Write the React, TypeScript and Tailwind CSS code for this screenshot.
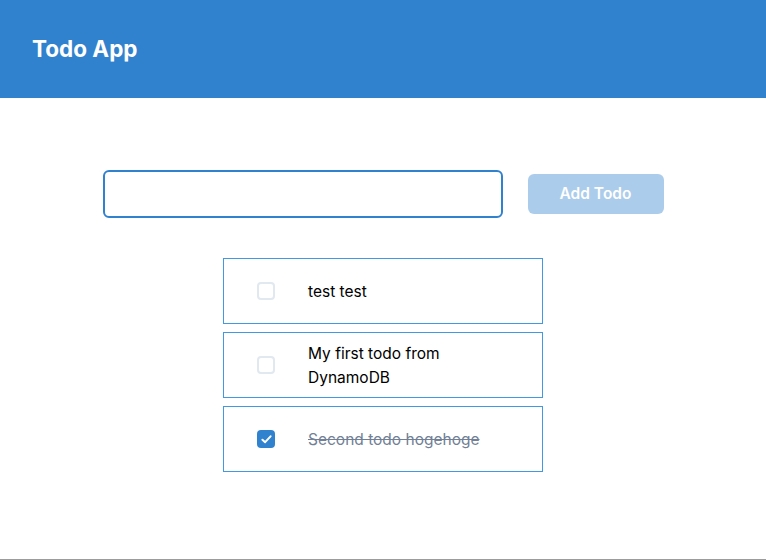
export default function App() {
  const todos = [
    { id: 1, text: "test test", done: false },
    { id: 2, text: "My first todo from DynamoDB", done: false },
    { id: 3, text: "Second todo hogehoge", done: true },
  ];

  return (
    <div className="flex h-[560px] flex-col border-b border-[#9c9c9c] bg-white font-['Inter',sans-serif] text-[#1a202c]">
      {/* Header */}
      <header className="flex h-[98px] shrink-0 items-center bg-[#3182ce] px-8">
        <h1 className="text-[22.5px] font-bold text-white">Todo App</h1>
      </header>

      {/* Form */}
      <div className="mt-[72px] flex items-center justify-center gap-[25px]">
        <input
          type="text"
          className="h-12 w-[400px] rounded-md border-2 border-[#3182ce] bg-white px-4 outline-none"
        />
        <button
          disabled
          className="h-10 w-[136px] rounded-md bg-[#3182ce] text-[15.5px] font-semibold text-white opacity-40"
        >
          Add Todo
        </button>
      </div>

      {/* Todo list */}
      <ul className="mx-auto mt-10 flex w-[320px] flex-col gap-2">
        {todos.map((t) => (
          <li
            key={t.id}
            className="flex h-[66px] items-center border border-[#4299e1]"
          >
            <div className="flex w-[84px] shrink-0 justify-center">
              {t.done ? (
                <span className="flex h-[18px] w-[18px] items-center justify-center rounded-sm bg-[#3182ce]">
                  <svg viewBox="0 0 12 10" className="h-[9px] w-[11px]" fill="none">
                    <path d="M1.5 5.2 4.5 8 10.5 1.5" stroke="white" strokeWidth="2.2" strokeLinecap="round" strokeLinejoin="round" />
                  </svg>
                </span>
              ) : (
                <span className="h-[18px] w-[18px] rounded-sm border-2 border-[#e2e8f0]" />
              )}
            </div>
            <span
              className={
                t.done
                  ? "pt-px pr-8 text-[15.5px] leading-6 text-[#718096] line-through"
                  : "pt-px pr-8 text-[15.5px] leading-6 text-black"
              }
            >
              {t.text}
            </span>
          </li>
        ))}
      </ul>
    </div>
  );
}
